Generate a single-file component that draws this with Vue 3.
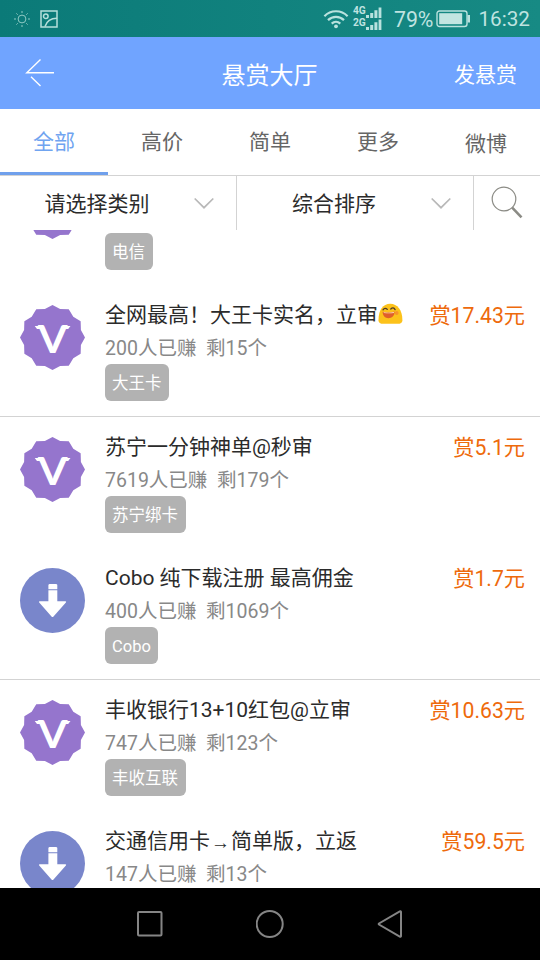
<script setup>
const tabs = ['全部', '高价', '简单', '更多', '微博']

const tasks = [
  { id: 0, icon: 'badge', partial: true, tag: '电信' },
  { id: 1, icon: 'badge', title: '全网最高！大王卡实名，立审', emoji: true, earned: '200', left: '15', tag: '大王卡', price: '17.43' },
  { id: 2, icon: 'badge', title: '苏宁一分钟神单@秒审', earned: '7619', left: '179', tag: '苏宁绑卡', price: '5.1' },
  { id: 3, icon: 'download', title: 'Cobo 纯下载注册 最高佣金', earned: '400', left: '1069', tag: 'Cobo', price: '1.7' },
  { id: 4, icon: 'badge', title: '丰收银行13+10红包@立审', earned: '747', left: '123', tag: '丰收互联', price: '10.63' },
  { id: 5, icon: 'download', title: '交通信用卡', arrow: true, rest: '简单版，立返', earned: '147', left: '13', tag: '', price: '59.5' },
]

// Twelve-pointed seal outline centred on 32.5,32.5
const seal = Array.from({ length: 24 }, (_, i) => {
  const r = i % 2 ? 29.4 : 32.5
  const a = (i * Math.PI) / 12
  return `${(32.5 + r * Math.sin(a)).toFixed(2)},${(32.5 - r * Math.cos(a)).toFixed(2)}`
}).join(' ')
</script>

<template>
  <div class="screen">
    <div class="status">
      <svg class="sun" width="18" height="18" viewBox="0 0 18 18" fill="none" stroke="#8fcac4" stroke-width="1">
        <circle cx="9" cy="9" r="3.9" />
        <path d="M9 1v2M9 15v2M1 9h2M15 9h2M3.4 3.4l1.3 1.3M13.3 13.3l1.3 1.3M3.4 14.6l1.3-1.3M13.3 4.7l1.3-1.3" />
      </svg>
      <svg class="photo" width="18" height="18" viewBox="0 0 18 18" fill="none" stroke="#b5dfdb" stroke-width="1.5">
        <rect x="1" y="1" width="16" height="16" />
        <circle cx="5.8" cy="6.2" r="2.3" />
        <path d="M5 16.500C6.500 11.500 10.500 8.200 17 8.200" />
      </svg>
      <div class="status-right">
        <svg class="wifi" width="26" height="20" viewBox="0 0 26 20" fill="none" stroke="#b9e2de" stroke-width="2.2">
          <path d="M1.400 7.200C7.800.6 18.200.6 24.600 7.200M5 11.100c4.500-4.400 11.500-4.400 16 0M8.700 14.600c2.500-2.300 6.100-2.300 8.600 0" />
          <circle cx="13" cy="17.300" r="1.900" fill="#b9e2de" stroke="none" />
        </svg>
        <div class="sims">
          <div v-for="n in ['4G', '2G']" :key="n" class="sim">
            <span>{{ n }}</span>
            <svg width="16" height="11" viewBox="0 0 16 11" fill="#b9e2de">
              <path d="M0 8h3v3H0zM4.200 6h3v5h-3zM8.400 3.200h3v7.800h-3zM12.600.4h2.800V11h-2.800z" />
            </svg>
          </div>
        </div>
        <span class="percent">79%</span>
        <svg class="battery" width="35" height="18" viewBox="0 0 35 18">
          <rect x="1" y="1" width="30" height="15.500" rx="2.500" fill="none" stroke="#b9e2de" stroke-width="1.400" />
          <rect x="3.200" y="3.200" width="23" height="11" fill="#c3e5e1" />
          <path d="M31.500 5h2.500v7.500h-2.500z" fill="#b9e2de" />
        </svg>
        <span class="clock">16:32</span>
      </div>
    </div>

    <header class="header">
      <svg class="back" width="30" height="30" viewBox="0 0 30 30" fill="none" stroke="#fff" stroke-width="1.400">
        <path d="M15.500 1.500 1.800 14.800H29M6 18.800l9.500 9.200" />
      </svg>
      <h1>悬赏大厅</h1>
      <span class="post">发悬赏</span>
    </header>

    <nav class="tabs">
      <span v-for="(t, i) in tabs" :key="t" class="tab" :class="{ active: i === 0, last: i === 4 }">{{ t }}</span>
    </nav>

    <div class="filters">
      <div v-for="f in ['请选择类别', '综合排序']" :key="f" class="filter">
        <span class="label">{{ f }}</span>
        <svg width="20" height="12" viewBox="0 0 20 12" fill="none" stroke="#b8b8b8" stroke-width="1.700">
          <path d="m.7 1.500 9.300 9.200 9.300-9.200" />
        </svg>
      </div>
      <div class="search">
        <svg width="32" height="33" viewBox="0 0 32 33" fill="none" stroke="#8b8b85">
          <circle cx="13" cy="13" r="11.800" stroke-width="1.200" />
          <path d="m21.200 21.700 9.300 9.600" stroke-width="2.600" />
        </svg>
      </div>
    </div>

    <main class="viewport">
      <div class="list">
        <article v-for="t in tasks" :key="t.id" class="task" :class="{ ruled: t.id % 2 === 1 }">
          <svg class="icon" width="65" height="65" viewBox="0 0 65 65">
            <template v-if="t.icon === 'badge'">
              <polygon :points="seal" fill="#9575cd" />
              <template v-if="!t.partial">
                <text x="0" y="0" transform="translate(32.600 48) scale(1.130 1)" text-anchor="middle" class="vee">V</text>
                <path d="M14.700 21h7v3h-4.700zM43.500 21h7l-2.300 3h-4.700z" fill="#fff" />
              </template>
            </template>
            <template v-else>
              <circle cx="32.500" cy="32.500" r="32.500" fill="#7986cb" />
              <path d="M28.400 18v-1.200l1-.8h6.900l1 .8v4.400h-8.900zM28.400 22.200h8.900v11.100h8.200q1.200.2.400 1.300L33.500 48.400q-1 1-2 0L19.200 34.600q-.8-1.100.4-1.300h8.800z" fill="#fff" />
            </template>
          </svg>
          <div class="info">
            <div class="line">
              <h2 v-if="t.title">{{ t.title }}<span v-if="t.arrow" class="arrow">→</span>{{ t.rest }}<svg v-if="t.emoji" class="emoji" width="25" height="22" viewBox="0 0 25 22">
                <path d="M.5 17.200C.5 7 5 .8 12.200.8S24.400 7 24.400 17.200c0 2.600-2 3.600-4.500 3.600H5C2.500 20.800.5 19.800.5 17.200Z" fill="#fcc21b" />
                <path d="M5 6.800q2-2.800 4.300-.4M12.800 6q2.500-2.400 4.300.6" fill="none" stroke="#4f3a2a" stroke-width="1.300" stroke-linecap="round" />
                <circle cx="18.700" cy="10" r="1.900" fill="#f79329" />
                <path d="M4.600 8.800q5.600 1.300 12-.3c.2 4.400-2.900 6.700-6.200 6.700S4.700 12.800 4.600 8.800Z" fill="#e0602a" />
                <path d="M5.500 9.200q5 1 10.600-.2l-.3.900q-4.600.8-9.900.1z" fill="#fbe3c8" />
              </svg></h2>
              <span v-if="t.price" class="price">赏{{ t.price }}元</span>
            </div>
            <p class="meta"><template v-if="t.earned">{{ t.earned }}人已赚&nbsp; 剩{{ t.left }}个</template></p>
            <span v-if="t.tag" class="tag">{{ t.tag }}</span>
          </div>
        </article>
      </div>
    </main>

    <footer class="navbar">
      <svg width="28" height="28" viewBox="0 0 28 28"><rect x="2" y="2" width="23.500" height="23.500" rx="1" /></svg>
      <svg width="28" height="28" viewBox="0 0 28 28"><circle cx="13.700" cy="14" r="13" /></svg>
      <svg width="28" height="28" viewBox="0 0 28 28"><path d="M25 1.800v24.400q-.3.900-1.200.4L3 14.500q-.6-.5 0-1L23.800 1.400q.9-.4 1.200.4Z" /></svg>
    </footer>
  </div>
</template>

<style>
body {
  margin: 0;
  background: #fff;
}
</style>

<style scoped>
.screen {
  display: flex;
  flex-direction: column;
  width: 540px;
  height: 960px;
  overflow: hidden;
  background: #fff;
  font-family: Roboto, "Noto Sans CJK SC", sans-serif;
  color: #2b2b2b;
}
.status {
  display: flex;
  align-items: center;
  flex: none;
  box-sizing: border-box;
  height: 37px;
  padding: 0 10px 0 13px;
  background: linear-gradient(90deg, #0b7a78, #178a84);
  color: #bfe3e0;
}
.photo {
  margin-left: 9px;
}
.status-right {
  display: flex;
  align-items: center;
  margin-left: auto;
}
.sims {
  display: flex;
  flex-direction: column;
  gap: 1px;
  margin: 0 12px 0 4px;
}
.sim {
  display: flex;
  align-items: flex-end;
  height: 11px;
  font: 700 10.200px/8px Roboto, sans-serif;
}
.sim span {
  width: 13px;
  height: 11px;
}
.percent {
  font-size: 21.300px;
  line-height: 37px;
  padding-top: 2px;
}
.battery {
  margin: 1px 7px 0 3px;
}
.clock {
  font-size: 20.700px;
  line-height: 37px;
  padding-top: 2px;
}
.header {
  display: grid;
  grid-template-columns: 1fr auto 1fr;
  align-items: center;
  flex: none;
  height: 72px;
  padding: 0 23px;
  background: #70a4ff;
  color: #fff;
}
.back {
  margin-left: 2px;
}
h1 {
  margin: 0;
  padding-right: 1px;
  font-size: 24px;
  font-weight: 400;
}
.post {
  justify-self: end;
  font-size: 21px;
}
.tabs {
  display: flex;
  flex: none;
  box-sizing: border-box;
  height: 67px;
  border-bottom: 1px solid #d3d3d3;
}
.tab {
  flex: 1;
  box-sizing: border-box;
  border-bottom: 3px solid transparent;
  text-align: center;
  font-size: 21px;
  line-height: 67px;
  height: 66px;
  color: #666;
}
.tab.active {
  color: #70a4f0;
  border-color: #70a0ec;
}
.tab.last {
  line-height: 70px;
}
.filters {
  display: flex;
  flex: none;
  height: 54px;
}
.filter {
  display: flex;
  align-items: center;
  box-sizing: border-box;
  width: 237px;
  padding-right: 22px;
  border-right: 1px solid #d3d3d3;
}
.label {
  flex: 1;
  padding-bottom: 2px;
  text-align: center;
  font-size: 21px;
}
.search {
  display: flex;
  align-items: center;
  justify-content: center;
  flex: 1;
  padding-bottom: 2px;
}
.viewport {
  display: flex;
  flex: none;
  flex-direction: column;
  justify-content: flex-start;
  height: 658px;
  overflow: hidden;
}
.list {
  margin-top: -76.500px;
}
.task {
  display: flex;
  box-sizing: border-box;
  height: 131.500px;
  padding: 20px 15px 0 20px;
}
.task.ruled {
  border-bottom: 1px solid #d3d3d3;
}
.icon {
  flex: none;
  margin-right: 20px;
}
.vee {
  font: 700 37.500px Lato, sans-serif;
  fill: #fff;
}
.info {
  flex: 1;
  min-width: 0;
}
.line {
  display: flex;
  justify-content: space-between;
  height: 30px;
  margin-top: -5px;
  line-height: 30px;
  white-space: nowrap;
}
h2 {
  margin: 0;
  font-size: 21px;
  font-weight: 400;
}
.arrow {
  display: inline-block;
  width: 21px;
  text-align: center;
  vertical-align: -1px;
  font-family: "Liberation Serif", serif;
  font-size: 19px;
  line-height: 20px;
}
.emoji {
  vertical-align: -3px;
}
.price {
  padding-top: 1px;
  font-size: 21.200px;
  color: #ee6a0c;
}
.meta {
  height: 34px;
  margin: 0;
  font-size: 19.500px;
  line-height: 37px;
  color: #888;
  white-space: nowrap;
}
.tag {
  display: inline-block;
  box-sizing: border-box;
  height: 37px;
  padding: 0 7.500px 0 7px;
  border-radius: 6px;
  background: #b2b2b2;
  color: #fff;
  font-size: 16.500px;
  line-height: 40px;
}
.navbar {
  display: flex;
  align-items: center;
  justify-content: center;
  gap: 92px;
  flex: none;
  height: 72px;
  background: #000;
}
.navbar svg {
  fill: none;
  stroke: #858585;
  stroke-width: 2;
}
</style>
